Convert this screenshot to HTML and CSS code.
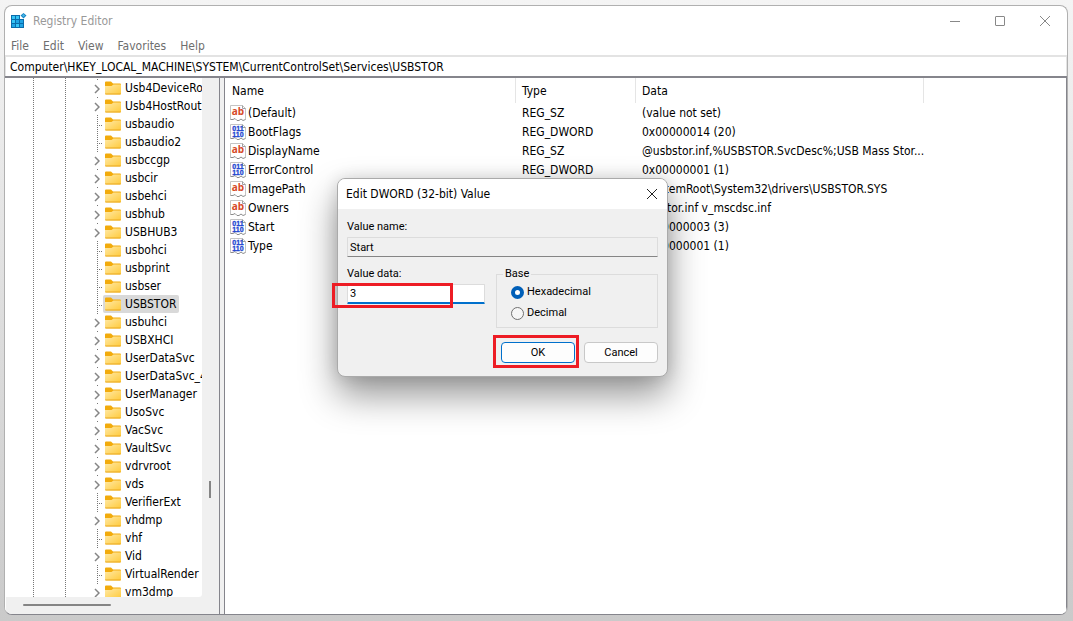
FILE: index.html
```
<!DOCTYPE html>
<html lang="en">

<head>
    <meta charset="UTF-8" />
    <meta name="viewport" content="width=device-width, initial-scale=1" />
    <title>Registry Editor</title>
    <link rel="stylesheet" href="styles.css">
</head>

<body>

    <!-- Shared icons -->
    <svg class="sprite" aria-hidden="true">
        <defs>
            <linearGradient id="folder-fill" x1="0" y1="0" x2="1" y2="1">
                <stop offset="0" stop-color="#ffe9a6" />
                <stop offset="1" stop-color="#ffca3a" />
            </linearGradient>
            <symbol id="folder" viewBox="0 0 16 14">
                <path d="M0 1.5Q0 .5 1 .5H6L8 2.500H15Q16 2.500 16 3.500V7H0Z" fill="#f2ab0c" />
                <path d="M0 5H6.500L8.500 3.500H16V12.500Q16 13.500 15 13.500H1Q0 13.500 0 12.500Z" fill="url(#folder-fill)" />
                <path d="M0 12.500Q0 13.500 1 13.500H15Q16 13.500 16 12.500Z" fill="#e9a820" />
            </symbol>
            <symbol id="chevron" viewBox="0 0 6 10">
                <path d="M1 1L5 5L1 9" fill="none" stroke="#858585" stroke-width="1.500" />
            </symbol>
            <symbol id="sheet" viewBox="0 0 16 16">
                <path d="M.5 14.500V.5H12.500L15.500 3.500V14.500" fill="#fff" stroke="#c4c4c4" />
                <path d="M12.500 .5V3.500H15.500" fill="none" stroke="#a0a0a0" />
                <path d="M.5 14.500H3L5 13.500L7 15.500H9L11 14L13 15.500L15.500 14.500" fill="none" stroke="#8c8c8c" />
            </symbol>
            <symbol id="string" viewBox="0 0 16 16">
                <use href="#sheet" />
                <text x="8" y="10" class="glyph glyph-string">ab</text>
            </symbol>
            <symbol id="binary" viewBox="0 0 16 16">
                <use href="#sheet" />
                <text x="8" y="7" class="glyph glyph-binary">011</text>
                <text x="8" y="13" class="glyph glyph-binary">110</text>
            </symbol>
        </defs>
    </svg>

    <main class="window">
        <header class="titlebar">
            <svg class="app-icon" viewBox="0 0 16 16" aria-hidden="true">
                <path d="M0 2H9V6H13V15H0Z" fill="#0a6cab" />
                <path d="M1 3H4V6H1ZM5 3H8V6H5ZM1 7H4V10H1ZM5 11H8V14H5Z" fill="#35c5f5" />
                <path d="M5 7H8V10H5ZM1 11H4V14H1ZM9 7H12V10H9ZM9 11H12V14H9Z" fill="#20a4e4" />
                <path d="M12.500 0L15.500 2.500L12.500 5.500L9.500 2.500Z" fill="#1584c4" />
                <path d="M12.500 1L14 2.500L12.500 4L11 2.500Z" fill="#4ab8e8" />
            </svg>
            <h1 class="app-title">Registry Editor</h1>
            <div class="window-buttons">
                <button type="button" aria-label="Minimize"><svg viewBox="0 0 12 12"><path d="M1 6.500H11" /></svg></button>
                <button type="button" aria-label="Maximize"><svg viewBox="0 0 12 12"><rect x="1.500" y="1.500" width="9" height="9" rx="0.500" /></svg></button>
                <button type="button" aria-label="Close"><svg viewBox="0 0 12 12"><path d="M1 1L11 11M11 1L1 11" /></svg></button>
            </div>
        </header>

        <nav class="menubar">
            <button type="button">File</button>
            <button type="button">Edit</button>
            <button type="button">View</button>
            <button type="button">Favorites</button>
            <button type="button">Help</button>
        </nav>

        <input class="address" type="text" aria-label="Path" value="Computer\HKEY_LOCAL_MACHINE\SYSTEM\CurrentControlSet\Services\USBSTOR">

        <div class="panes">
            <section class="tree-pane">
                <ul class="tree">
                    <li class="parent"><svg class="chevron"><use href="#chevron" /></svg><span class="key"><svg class="folder"><use href="#folder" /></svg>Usb4DeviceRo</span></li>
                    <li class="parent"><svg class="chevron"><use href="#chevron" /></svg><span class="key"><svg class="folder"><use href="#folder" /></svg>Usb4HostRout</span></li>
                    <li><span class="key"><svg class="folder"><use href="#folder" /></svg>usbaudio</span></li>
                    <li><span class="key"><svg class="folder"><use href="#folder" /></svg>usbaudio2</span></li>
                    <li class="parent"><svg class="chevron"><use href="#chevron" /></svg><span class="key"><svg class="folder"><use href="#folder" /></svg>usbccgp</span></li>
                    <li class="parent"><svg class="chevron"><use href="#chevron" /></svg><span class="key"><svg class="folder"><use href="#folder" /></svg>usbcir</span></li>
                    <li class="parent"><svg class="chevron"><use href="#chevron" /></svg><span class="key"><svg class="folder"><use href="#folder" /></svg>usbehci</span></li>
                    <li class="parent"><svg class="chevron"><use href="#chevron" /></svg><span class="key"><svg class="folder"><use href="#folder" /></svg>usbhub</span></li>
                    <li class="parent"><svg class="chevron"><use href="#chevron" /></svg><span class="key"><svg class="folder"><use href="#folder" /></svg>USBHUB3</span></li>
                    <li><span class="key"><svg class="folder"><use href="#folder" /></svg>usbohci</span></li>
                    <li><span class="key"><svg class="folder"><use href="#folder" /></svg>usbprint</span></li>
                    <li><span class="key"><svg class="folder"><use href="#folder" /></svg>usbser</span></li>
                    <li><span class="key selected"><svg class="folder"><use href="#folder" /></svg>USBSTOR</span></li>
                    <li class="parent"><svg class="chevron"><use href="#chevron" /></svg><span class="key"><svg class="folder"><use href="#folder" /></svg>usbuhci</span></li>
                    <li class="parent"><svg class="chevron"><use href="#chevron" /></svg><span class="key"><svg class="folder"><use href="#folder" /></svg>USBXHCI</span></li>
                    <li class="parent"><svg class="chevron"><use href="#chevron" /></svg><span class="key"><svg class="folder"><use href="#folder" /></svg>UserDataSvc</span></li>
                    <li class="parent"><svg class="chevron"><use href="#chevron" /></svg><span class="key"><svg class="folder"><use href="#folder" /></svg>UserDataSvc_4</span></li>
                    <li class="parent"><svg class="chevron"><use href="#chevron" /></svg><span class="key"><svg class="folder"><use href="#folder" /></svg>UserManager</span></li>
                    <li class="parent"><svg class="chevron"><use href="#chevron" /></svg><span class="key"><svg class="folder"><use href="#folder" /></svg>UsoSvc</span></li>
                    <li class="parent"><svg class="chevron"><use href="#chevron" /></svg><span class="key"><svg class="folder"><use href="#folder" /></svg>VacSvc</span></li>
                    <li class="parent"><svg class="chevron"><use href="#chevron" /></svg><span class="key"><svg class="folder"><use href="#folder" /></svg>VaultSvc</span></li>
                    <li class="parent"><svg class="chevron"><use href="#chevron" /></svg><span class="key"><svg class="folder"><use href="#folder" /></svg>vdrvroot</span></li>
                    <li class="parent"><svg class="chevron"><use href="#chevron" /></svg><span class="key"><svg class="folder"><use href="#folder" /></svg>vds</span></li>
                    <li><span class="key"><svg class="folder"><use href="#folder" /></svg>VerifierExt</span></li>
                    <li class="parent"><svg class="chevron"><use href="#chevron" /></svg><span class="key"><svg class="folder"><use href="#folder" /></svg>vhdmp</span></li>
                    <li><span class="key"><svg class="folder"><use href="#folder" /></svg>vhf</span></li>
                    <li class="parent"><svg class="chevron"><use href="#chevron" /></svg><span class="key"><svg class="folder"><use href="#folder" /></svg>Vid</span></li>
                    <li><span class="key"><svg class="folder"><use href="#folder" /></svg>VirtualRender</span></li>
                    <li class="parent"><svg class="chevron"><use href="#chevron" /></svg><span class="key"><svg class="folder"><use href="#folder" /></svg>vm3dmp</span></li>
                </ul>
                <div class="scroll-y"><span class="thumb"></span></div>
                <div class="scroll-x"><span class="thumb"></span></div>
            </section>

            <section class="value-pane">
                <table class="values">
                    <thead>
                        <tr>
                            <th class="col-name">Name</th>
                            <th class="col-type">Type</th>
                            <th class="col-data">Data</th>
                        </tr>
                    </thead>
                    <tbody>
                        <tr>
                            <td><span class="value"><svg><use href="#string" /></svg>(Default)</span></td>
                            <td>REG_SZ</td>
                            <td>(value not set)</td>
                        </tr>
                        <tr>
                            <td><span class="value"><svg><use href="#binary" /></svg>BootFlags</span></td>
                            <td>REG_DWORD</td>
                            <td>0x00000014 (20)</td>
                        </tr>
                        <tr>
                            <td><span class="value"><svg><use href="#string" /></svg>DisplayName</span></td>
                            <td>REG_SZ</td>
                            <td>@usbstor.inf,%USBSTOR.SvcDesc%;USB Mass Stor...</td>
                        </tr>
                        <tr>
                            <td><span class="value"><svg><use href="#binary" /></svg>ErrorControl</span></td>
                            <td>REG_DWORD</td>
                            <td>0x00000001 (1)</td>
                        </tr>
                        <tr>
                            <td><span class="value"><svg><use href="#string" /></svg>ImagePath</span></td>
                            <td>REG_EXPAND_SZ</td>
                            <td>\SystemRoot\System32\drivers\USBSTOR.SYS</td>
                        </tr>
                        <tr>
                            <td><span class="value"><svg><use href="#string" /></svg>Owners</span></td>
                            <td>REG_MULTI_SZ</td>
                            <td>usbstor.inf v_mscdsc.inf</td>
                        </tr>
                        <tr>
                            <td><span class="value"><svg><use href="#binary" /></svg>Start</span></td>
                            <td>REG_DWORD</td>
                            <td>0x00000003 (3)</td>
                        </tr>
                        <tr>
                            <td><span class="value"><svg><use href="#binary" /></svg>Type</span></td>
                            <td>REG_DWORD</td>
                            <td>0x00000001 (1)</td>
                        </tr>
                    </tbody>
                </table>
            </section>
        </div>
    </main>

    <!-- Edit value -->
    <form class="dialog" role="dialog" aria-labelledby="dialog-title">
        <header class="dialog-header">
            <h2 id="dialog-title">Edit DWORD (32-bit) Value</h2>
            <button type="button" aria-label="Close"><svg viewBox="0 0 12 12"><path d="M1 1L11 11M11 1L1 11" /></svg></button>
        </header>
        <div class="dialog-body">
            <div class="field">
                <label for="value-name">Value name:</label>
                <input id="value-name" class="readonly" type="text" value="Start" readonly>
            </div>
            <div class="dialog-row">
                <div class="field field-data">
                    <label for="value-data">Value data:</label>
                    <div class="marked">
                        <input id="value-data" class="active" type="text" value="3">
                        <span class="mark"></span>
                    </div>
                </div>
                <fieldset class="base">
                    <legend>Base</legend>
                    <label><input type="radio" name="base" checked>Hexadecimal</label>
                    <label><input type="radio" name="base">Decimal</label>
                </fieldset>
            </div>
            <div class="actions">
                <div class="marked">
                    <button type="submit" class="btn btn-default">OK</button>
                    <span class="mark mark-around"></span>
                </div>
                <button type="button" class="btn">Cancel</button>
            </div>
        </div>
    </form>

</body>

</html>
```
FILE: styles.css
```
* {
    box-sizing: border-box;
}

html,
body {
    height: 100%;
    margin: 0;
}

body {
    display: flex;
    padding: 5px 5px 6px 4px;
    overflow: hidden;
    background: linear-gradient(#f4f4f4, #dedede 50%, #cacaca);
    color: #000;
    font-family: "DejaVu Sans Condensed", "Segoe UI", sans-serif;
    font-size: 12px;
    line-height: 18px;
}

button,
input {
    font: inherit;
    color: inherit;
}

button {
    padding: 0;
    border: none;
    background: none;
}

.sprite {
    position: absolute;
    width: 0;
    height: 0;
}

.glyph {
    font-weight: bold;
    text-anchor: middle;
}

.glyph-string {
    font-family: "Open Sans", sans-serif;
    font-size: 10px;
    fill: #d64a28;
}

.glyph-binary {
    font-family: "Liberation Sans", sans-serif;
    font-size: 7px;
    fill: #2448d0;
    stroke: #2448d0;
    stroke-width: 0.3px;
}

/* Main window */
.window {
    display: flex;
    flex: 1;
    flex-direction: column;
    min-width: 0;
    overflow: hidden;
    border: 1px solid #b0b0b0;
    border-bottom-color: #85858c;
    border-radius: 8px;
    background: #fff;
}

.titlebar {
    display: flex;
    align-items: center;
    height: 30px;
    padding-left: 6px;
}

.app-icon {
    width: 16px;
    height: 16px;
}

.app-title {
    flex: 1;
    margin: 0 0 0 6px;
    color: #999;
    font-size: 12px;
    font-weight: normal;
}

.window-buttons {
    display: flex;
}

.window-buttons button {
    display: flex;
    align-items: center;
    justify-content: center;
    width: 45px;
    height: 30px;
}

.window-buttons svg,
.dialog-header svg {
    width: 12px;
    height: 12px;
    fill: none;
    stroke: #888;
}

.menubar {
    display: flex;
    gap: 14px;
    height: 19px;
    padding-left: 6px;
    color: #6e6e6e;
}

.address {
    height: 21px;
    padding: 0 4px;
    border: 1px solid #e3e3e3;
    border-top-width: 2px;
    border-bottom: none;
    outline: none;
}

.panes {
    display: flex;
    flex: 1;
    gap: 4px;
    min-height: 0;
    border-top: 2px solid #85858c;
    background: #f0f0f0;
}

/* Key tree */
.tree-pane {
    display: grid;
    grid-template: 1fr 17px / 1fr 17px;
    width: 215px;
    min-height: 0;
    padding-left: 1px;
    border-right: 1px solid #85858c;
    box-shadow: inset 1px 0 #fff;
}

.tree {
    min-width: 0;
    min-height: 0;
    margin: 0;
    padding: 1px 0 0;
    overflow: hidden;
    border-radius: 0 0 3px 0;
    list-style: none;
    background:
        repeating-linear-gradient(#777 0 1px, #fff 1px 2px) 27px 0 / 1px 100% no-repeat,
        repeating-linear-gradient(#777 0 1px, #fff 1px 2px) 59px 0 / 1px 100% no-repeat,
        #fff;
}

.tree li {
    display: flex;
    height: 18px;
    padding-left: 97px;
    white-space: nowrap;
    background:
        repeating-linear-gradient(#777 0 1px, transparent 1px 2px) 91px 0 / 1px 100% no-repeat,
        repeating-linear-gradient(90deg, #777 0 1px, transparent 1px 2px) 91px 10px / 6px 1px no-repeat;
}

.tree .parent {
    padding-left: 88px;
    background: linear-gradient(#777, #777) 91px 0 / 1px 1px no-repeat;
}

.chevron {
    flex: none;
    width: 6px;
    height: 10px;
    margin: 5px 3px 0 0;
}

.key {
    display: flex;
    flex: none;
    gap: 4px;
    padding: 0 3px 0 2px;
}

.key.selected {
    border-radius: 2px;
    background: #d9d9d9;
}

.folder {
    flex: none;
    width: 16px;
    height: 14px;
    margin-top: 2px;
}

.scroll-y {
    display: flex;
    align-items: flex-end;
    justify-content: center;
    padding: 0 2px 99px 0;
}

.scroll-y .thumb {
    width: 2px;
    height: 17px;
    background: #858585;
}

.scroll-x {
    display: flex;
    grid-column: 1 / 3;
    padding: 7px 0 0 17px;
}

.scroll-x .thumb {
    width: 88px;
    height: 2px;
    border-radius: 1px;
    background: #858585;
}

/* Value list */
.value-pane {
    flex: 1;
    min-width: 0;
    border: 1px solid #85858c;
    border-width: 0 1px 0 1px;
    background: #fff;
}

.values {
    border-collapse: separate;
    border-spacing: 0;
    table-layout: fixed;
    width: 699px;
}

.values th {
    height: 25px;
    padding: 0 6px;
    border-right: 1px solid #e5e5e5;
    font-weight: normal;
    text-align: left;
}

.values td {
    height: 19px;
    padding: 0 0 0 6px;
    white-space: nowrap;
}

.values th:first-child {
    padding-left: 7px;
}

.values td:first-child {
    padding-left: 5px;
}

.col-name {
    width: 291px;
}

.col-type {
    width: 120px;
}

.value {
    display: flex;
    align-items: center;
    gap: 2px;
}

.value svg {
    width: 16px;
    height: 16px;
}

/* Edit dialog */
.dialog {
    position: absolute;
    top: 178px;
    left: 337px;
    width: 331px;
    border: 1px solid #aaa;
    border-radius: 8px;
    background: #f0f0f0;
    box-shadow: 0 18px 36px rgba(0, 0, 0, 0.42), 0 0 16px rgba(0, 0, 0, 0.12);
    font-family: Roboto, sans-serif;
    font-size: 11px;
    line-height: 16px;
}

.dialog-header {
    display: flex;
    align-items: center;
    justify-content: space-between;
    height: 30px;
    padding: 0 9px 0 8px;
    border-radius: 7px 7px 0 0;
    background: #fff;
    font-family: "DejaVu Sans Condensed", "Segoe UI", sans-serif;
}

.dialog-header h2 {
    margin: 0;
    font-size: 12px;
    font-weight: normal;
}

.dialog-header button {
    display: flex;
}

.dialog-header svg {
    stroke: #222;
}

.dialog-body {
    padding: 10px 9px 13px;
}

.field {
    display: flex;
    flex-direction: column;
    gap: 2px;
}

.field input {
    width: 100%;
    height: 20px;
    padding: 0 2px;
    border: 1px solid #dcdcdc;
    border-radius: 1px;
    outline: none;
    background: #fff;
}

.field .readonly {
    border-bottom-color: #858585;
    background: #f0f0f0;
}

.field .active {
    display: block;
    border-bottom: 2px solid #0070cc;
}

.dialog-row {
    display: flex;
    gap: 11px;
    margin-top: 9px;
}

.field-data {
    width: 138px;
}

.base {
    display: flex;
    flex: 1;
    flex-direction: column;
    gap: 5px;
    min-width: 0;
    margin: 0;
    padding: 2px 14px 6px;
    border: 1px solid #dcdcdc;
}

.base legend {
    margin-left: -8px;
    padding: 0 2px;
}

.base label {
    display: flex;
    align-items: center;
    gap: 3px;
}

.base input {
    width: 13px;
    height: 13px;
    margin: 0;
    border: 1px solid #707070;
    border-radius: 50%;
    appearance: none;
    background: #f6f6f6;
}

.base input:checked {
    border: 4px solid #005fb8;
    background: #fff;
}

.actions {
    display: flex;
    justify-content: flex-end;
    gap: 9px;
    margin-top: 14px;
}

.btn {
    display: block;
    width: 74px;
    height: 21px;
    border: 1px solid #c8c8c8;
    border-radius: 4px;
    background: #fdfdfd;
}

.btn-default {
    border-color: #0070cc;
}

/* Red highlight frames */
.marked {
    position: relative;
}

.mark {
    position: absolute;
    inset: -1px 32px -4px -15px;
    border: 3px solid #ed1c24;
    pointer-events: none;
}

.mark-around {
    inset: -7px -4px -5px -8px;
}
```
